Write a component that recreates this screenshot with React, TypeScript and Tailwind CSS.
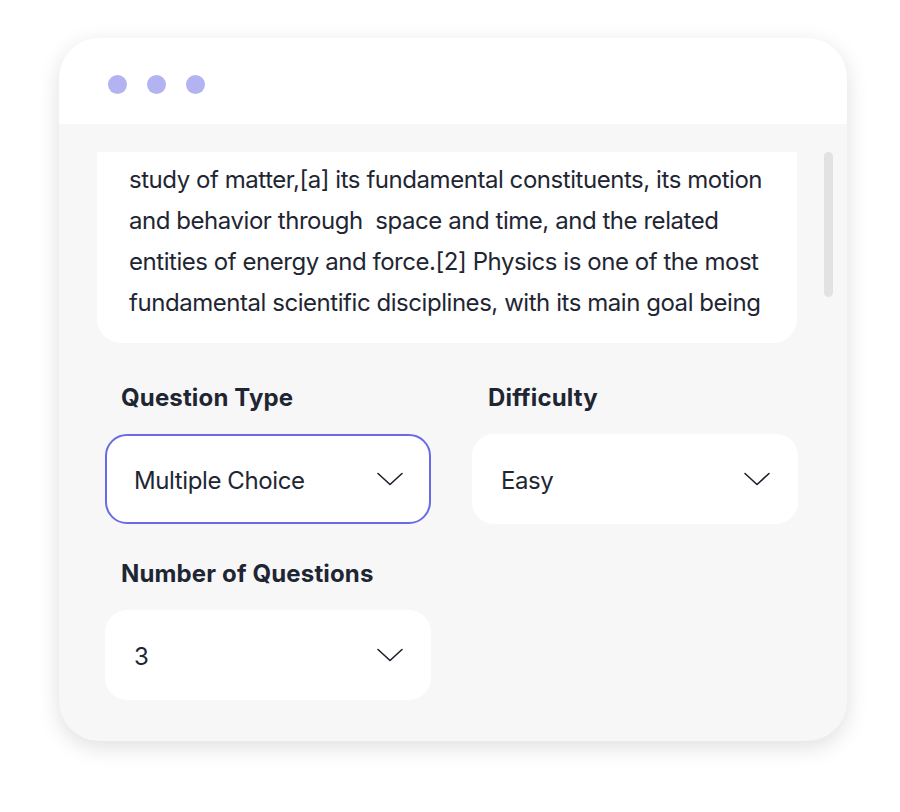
import { type ReactNode } from 'react'

function Chevron() {
  return (
    <svg viewBox="0 0 26 14" className="h-[14px] w-[26px] shrink-0" fill="none" aria-hidden="true">
      <path d="M1 1.5 13 12.5 25 1.5" stroke="#1a1f2b" strokeWidth="1.6" strokeLinecap="round" strokeLinejoin="round" />
    </svg>
  )
}

function Field({ label, value, active }: { label: string; value: string; active?: boolean }) {
  return (
    <div className="flex flex-col">
      <div className="pt-px pl-4 text-[24px] font-bold leading-[32px] tracking-[0.15px] text-[#1f2633]">{label}</div>
      <div
        className={
          active
            ? 'mt-[20px] flex h-[90px] items-center justify-between rounded-[22px] border-2 border-[#6a6ae6] bg-white pl-[27px] pr-[26px]'
            : 'mt-[20px] flex h-[90px] items-center justify-between rounded-[22px] border-2 border-white bg-white pl-[27px] pr-[26px]'
        }
      >
        <span className="pt-[3px] text-[24px] leading-[32px] tracking-[-0.4px] text-[#1f2633]">{value}</span>
        <Chevron />
      </div>
    </div>
  )
}

function Dot() {
  return <span className="h-[19px] w-[19px] rounded-full bg-[#b3b3f1]" />
}

function Line({ children }: { children: ReactNode }) {
  return <div className="whitespace-pre">{children}</div>
}

export default function App() {
  return (
    <div className="min-h-[812px] w-[900px] bg-white pt-[38px] pl-[59px] [font-family:Inter,'Noto_Sans',sans-serif]">
      <div className="w-[788px] overflow-hidden rounded-[40px] bg-[#f7f7f7] shadow-[0_6px_22px_rgba(0,0,0,0.13)]">
        <div className="flex h-[86px] items-center gap-[20px] bg-white pt-[6px] pl-[49px]">
          <Dot />
          <Dot />
          <Dot />
        </div>
        <div className="pt-[28px] pb-[41px]">
          <div className="flex items-start">
            <div className="ml-[38px] w-[700px] rounded-b-[24px] bg-white pt-[7px] pb-[20px] pl-[32px] text-[24px] leading-[41px] tracking-[-0.45px] text-[#1f2633]">
              <Line>study of matter,[a] its fundamental constituents, its motion</Line>
              <Line>and behavior through  space and time, and the related</Line>
              <Line>entities of energy and force.[2] Physics is one of the most</Line>
              <Line>fundamental scientific disciplines, with its main goal being</Line>
            </div>
            <div className="ml-[27px] h-[145px] w-[9px] rounded-full bg-[#e2e2e2]" />
          </div>
          <div className="mt-[38px] ml-[46px] grid w-[693px] grid-cols-2 gap-x-[41px] gap-y-[33px]">
            <Field label="Question Type" value="Multiple Choice" active />
            <Field label="Difficulty" value="Easy" />
            <Field label="Number of Questions" value="3" />
          </div>
        </div>
      </div>
    </div>
  )
}
